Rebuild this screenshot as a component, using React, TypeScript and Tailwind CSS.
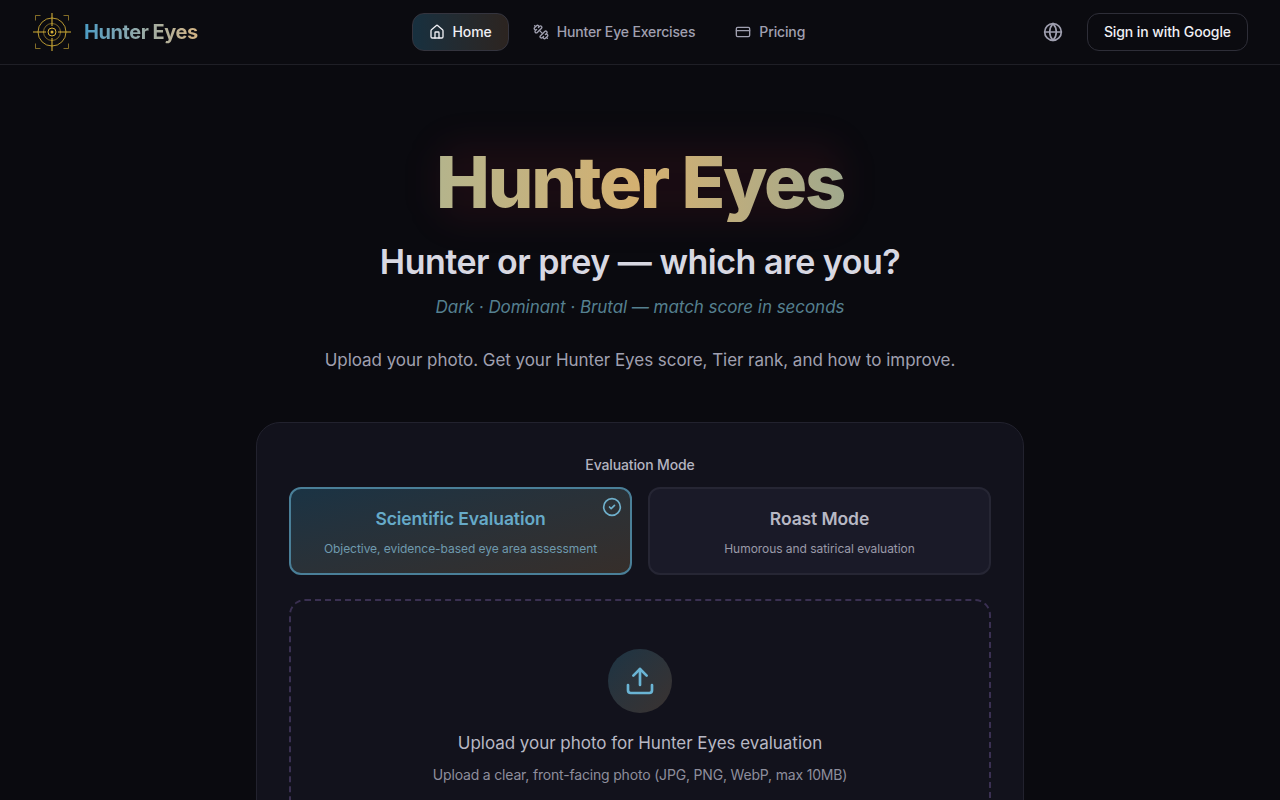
import React from 'react';
import { CircleCheck, CreditCard, Dumbbell, Globe, House, Upload } from 'lucide-react';

const Logo = () => (
  <svg width="40" height="40" viewBox="0 0 40 40" fill="none" stroke="#d4af37">
    <path d="M3.5 8.5v-5h5M31.5 3.5h5v5M36.5 31.5v5h-5M8.5 36.5h-5v-5" strokeWidth="0.8" opacity="0.75" />
    <circle cx="20" cy="20" r="14" strokeWidth="1" opacity="0.85" />
    <circle cx="20" cy="20" r="8.5" strokeWidth="0.8" opacity="0.7" />
    <circle cx="20" cy="20" r="4" strokeWidth="1" />
    <circle cx="20" cy="20" r="1.5" fill="#d4af37" stroke="none" />
    <path d="M20 1v13M20 26v13M1 20h13M26 20h13" strokeWidth="1.1" />
  </svg>
);

const App = () => {
  return (
    <div className="h-[800px] overflow-hidden bg-[#0a0a0f] font-['Inter',sans-serif]">
      <header className="h-[65px] flex items-center justify-between border-b border-[#1f1f26] bg-[#0b0b10] px-[32px]">
        <div className="flex items-center gap-[12px]">
          <Logo />
          <span className="text-[20px] font-bold leading-7 tracking-[-0.45px] bg-gradient-to-r from-[#4a9cc4] to-[#d4b483] bg-clip-text text-transparent">
            Hunter Eyes
          </span>
        </div>
        <nav className="flex items-center gap-[8px]">
          <a className="flex items-center gap-[8px] h-[38px] px-[16px] rounded-xl border border-[#34343e] bg-gradient-to-r from-[#17303f] to-[#2c2420] text-[14px] font-medium tracking-[-0.1px] text-[#f0f0f5]">
            <House size={16} strokeWidth={2} />
            <span className="-mt-[2px]">Home</span>
          </a>
          <a className="flex items-center gap-[8px] h-[38px] px-[16px] text-[14px] font-medium tracking-[-0.15px] text-[#a0a0b0]">
            <Dumbbell size={16} strokeWidth={2} className="-scale-x-100" />
            <span className="-mt-[2px]">Hunter Eye Exercises</span>
          </a>
          <a className="flex items-center gap-[8px] h-[38px] px-[16px] text-[14px] font-medium tracking-[-0.14px] text-[#a0a0b0]">
            <CreditCard size={16} strokeWidth={2} />
            <span className="-mt-[2px]">Pricing</span>
          </a>
        </nav>
        <div className="flex items-center justify-end gap-[16px]">
          <button className="w-[36px] h-[36px] flex items-center justify-center text-[#a0a0b0]">
            <Globe size={20} strokeWidth={2} />
          </button>
          <button className="h-[38px] px-[16px] pb-[2px] rounded-xl border border-[#2e2e38] text-[14px] font-medium tracking-[-0.1px] text-[#f0f0f5]">
            Sign in with Google
          </button>
        </div>
      </header>

      <main className="flex flex-col items-center pt-[77px]">
        <div className="relative">
          <div className="absolute inset-0 bg-[#a02030]/10 blur-lg rounded-3xl" />
          <h1 className="relative text-[72px] leading-[80px] font-extrabold tracking-[-2.3px] text-center bg-gradient-to-r from-[#b4b48c] via-[#d4b070] to-[#a0a88c] bg-clip-text text-transparent">
            Hunter Eyes
          </h1>
        </div>
        <h2 className="mt-[20px] text-[34px] leading-[40px] font-semibold tracking-[-0.5px] text-[#d8d8e2]">
          Hunter or prey — which are you?
        </h2>
        <p className="mt-[11px] text-[17px] leading-[28px] italic tracking-[-0.05px] text-[#55808f]">
          Dark · Dominant · Brutal — match score in seconds
        </p>
        <p className="mt-[25px] text-[17px] leading-[28px] tracking-[-0.04px] text-[#a0a0b0]">
          Upload your photo. Get your Hunter Eyes score, Tier rank, and how to improve.
        </p>

        <section className="mt-[48px] w-[768px] rounded-3xl border border-[#22222e] bg-[#12121c] p-[32px]">
          <div className="text-center text-[14px] leading-[20px] font-medium tracking-[-0.13px] text-[#b4b4c0]">Evaluation Mode</div>
          <div className="mt-[12px] grid grid-cols-2 gap-[16px]">
            <div className="relative h-[88px] rounded-xl border-2 border-[#4a7f98] bg-gradient-to-br from-[#1a3344] to-[#362e2a] flex flex-col items-center justify-center">
              <CircleCheck size={20} strokeWidth={2} className="absolute top-[8px] right-[8px] text-[#6fb0cc]" />
              <div className="text-[17.5px] leading-[26px] font-semibold tracking-[-0.1px] text-[#66aac8]">Scientific Evaluation</div>
              <div className="mt-[9px] text-[12px] leading-[16px] tracking-[-0.05px] text-[#6f9aae]">
                Objective, evidence-based eye area assessment
              </div>
            </div>
            <div className="h-[88px] rounded-xl border-2 border-[#262634] bg-[#1a1a28] flex flex-col items-center justify-center">
              <div className="text-[17.5px] leading-[26px] font-semibold tracking-[-0.1px] text-[#b8b8c4]">Roast Mode</div>
              <div className="mt-[9px] text-[12px] leading-[16px] tracking-[-0.05px] text-[#9a9aa8]">Humorous and satirical evaluation</div>
            </div>
          </div>
          <div className="mt-[24px] rounded-2xl border-2 border-dashed border-[#3a3052] py-[48px] flex flex-col items-center">
            <div className="w-[64px] h-[64px] rounded-full bg-gradient-to-br from-[#1c3444] to-[#3a3230] flex items-center justify-center">
              <Upload size={32} strokeWidth={2} className="text-[#6ab4d4]" />
            </div>
            <p className="mt-[16px] text-[17px] leading-[28px] tracking-[-0.03px] text-[#b8b8c4]">Upload your photo for Hunter Eyes evaluation</p>
            <p className="mt-[8px] text-[14px] leading-[20px] tracking-[-0.18px] text-[#8e8e9c]">
              Upload a clear, front-facing photo (JPG, PNG, WebP, max 10MB)
            </p>
          </div>
        </section>
      </main>
    </div>
  );
};

export default App;
